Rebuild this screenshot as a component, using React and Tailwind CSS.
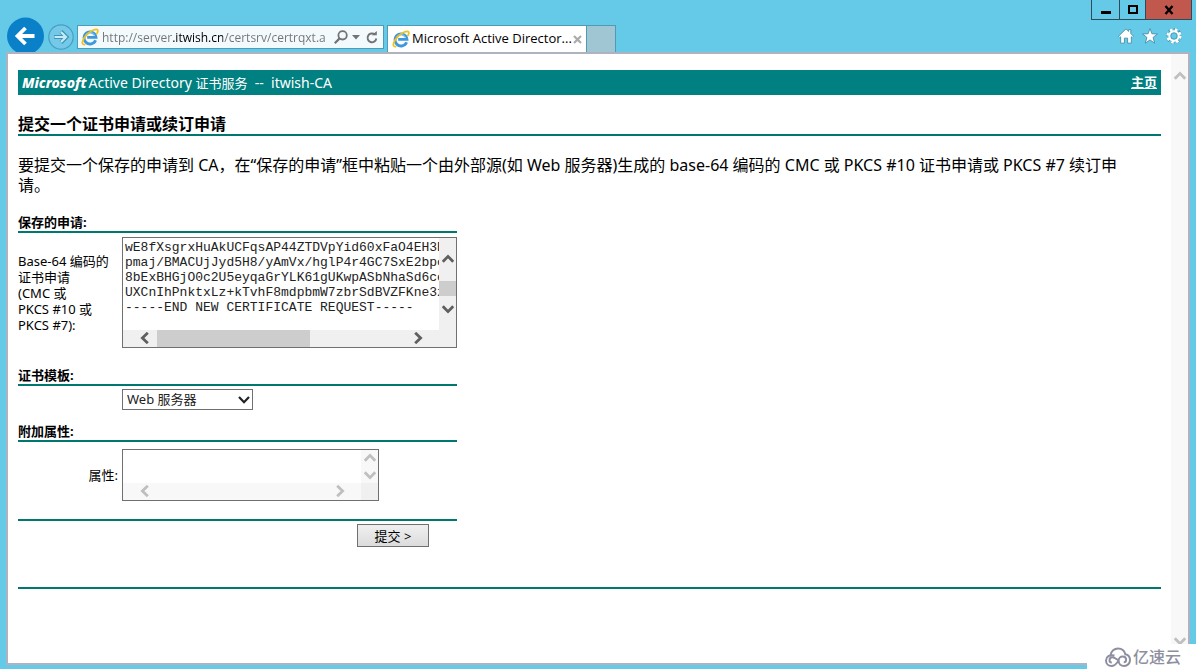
import { useState } from 'react';
import clsx from 'clsx';

const REQUEST = [
    'wE8fXsgrxHuAkUCFqsAP44ZTDVpYid60xFaO4EH3E',
    'pmaj/BMACUjJyd5H8/yAmVx/hglP4r4GC7SxE2bpc',
    '8bExBHGjO0c2U5eyqaGrYLK61gUKwpASbNhaSd6co',
    'UXCnIhPnktxLz+kTvhF8mdpbmW7zbrSdBVZFKne3z',
    '-----END NEW CERTIFICATE REQUEST-----',
].join('\n');

const ROTATE = {
    up: '',
    right: 'rotate-90',
    down: 'rotate-180',
    left: '-rotate-90',
};

function IeLogo() {
    return (
        <svg viewBox="0 0 18 18" className="size-[18px] shrink-0" fill="none">
            <path d="M14.6 12.2A6 6 0 1 1 15 9.3H6.2" stroke="#3f97dc" strokeWidth="2.8" />
            <path d="M13.8 8A5 5 0 0 0 4.6 7" stroke="#8fd0f5" strokeWidth="1" />
            <path d="M3.6 16.6C-.2 17 1.2 11.4 5.6 6.8S15.6.2 16.6 2c.5.9.1 2.2-.7 3.6" stroke="#f2c21c" strokeWidth="1.8" strokeLinecap="round" />
        </svg>
    );
}

function ArrowButton({ dir, label, disabled }) {
    return (
        <button
            type="button"
            aria-label={label}
            disabled={disabled}
            className={clsx('flex h-4 w-[17px] shrink-0 items-center justify-center', disabled ? 'text-[#bfbfbf]' : 'text-[#5f5f5f]')}
        >
            <svg viewBox="0 0 12 12" className={clsx('size-3', ROTATE[dir])} fill="none" stroke="currentColor" strokeWidth="2.8">
                <path d="M.8 8.8 6 3.4l5.2 5.4" />
            </svg>
        </button>
    );
}

// text area with the always-visible scroll bars of the old browser
function ScrollBox({ className, disabled, vertical, horizontal, ...props }) {
    const bar = disabled ? 'bg-[#f8f8f8]' : 'bg-[#f0f0f0]';
    return (
        <div className={clsx('grid grid-cols-[minmax(0,1fr)_17px] grid-rows-[minmax(0,1fr)_17px] border border-[#707070] bg-white', className)}>
            <textarea
                wrap="off"
                spellCheck={false}
                className="block h-full w-full resize-none overflow-hidden px-0.5 pt-0.5 font-['Liberation_Mono',monospace] text-[13px] leading-[15px] text-[#222] outline-none"
                {...props}
            />
            <div className={clsx('flex flex-col justify-between', bar, !disabled && 'py-[13px]')}>
                <ArrowButton dir="up" label="向上滚动" disabled={disabled} />
                {vertical}
                <ArrowButton dir="down" label="向下滚动" disabled={disabled} />
            </div>
            <div className={clsx('flex justify-between px-[13px]', bar)}>
                <ArrowButton dir="left" label="向左滚动" disabled={disabled} />
                {horizontal}
                <ArrowButton dir="right" label="向右滚动" disabled={disabled} />
            </div>
            <div className="bg-[#f0f0f0]" />
        </div>
    );
}

function SectionTitle({ className, children, ...props }) {
    return (
        <h2 className={clsx('border-b-2 border-[#00786f] text-[13px] leading-[18px] font-bold', className)} {...props}>
            {children}
        </h2>
    );
}

function BrowserBar() {
    const [url, setUrl] = useState('http://server.itwish.cn/certsrv/certrqxt.a');

    return (
        <header className="flex h-[52px] items-end font-['Open_Sans','Noto_Sans_CJK_SC',sans-serif]">
            <nav className="flex min-w-0 flex-1 items-end">
                <button type="button" aria-label="后退" className="h-[35px] w-[38px] shrink-0">
                    <svg viewBox="0 0 38 35" className="h-[35px] w-[38px]">
                        <circle cx="19.500" cy="19" r="18.5" fill="#0a80c8" />
                        <path d="M28.500 19H12M19.500 11l-8 8 8 8" fill="none" stroke="#fff" strokeWidth="3.8" />
                    </svg>
                </button>
                <button type="button" aria-label="前进" className="mb-0.5 ml-1 size-[26px] shrink-0">
                    <svg viewBox="0 0 26 26" className="size-[26px]" fill="none">
                        <circle cx="13" cy="13" r="12.2" fill="#74c9e8" stroke="#4a9dbe" strokeWidth="1.2" />
                        <path d="M6 13h12M13 7.500l5.500 5.500-5.500 5.500" stroke="#3f93b5" strokeWidth="4" />
                        <path d="M6.500 13h11M13 8l5 5-5 5" stroke="#c5ebf8" strokeWidth="2.200" />
                    </svg>
                </button>
                <div className="mb-[3px] ml-[3px] flex h-6 w-[307px] items-center border border-[#4f9bb5] bg-[#f2fafd] pl-[3px] text-[#737373]">
                    <IeLogo />
                    <input
                        aria-label="地址"
                        value={url}
                        onChange={(e) => setUrl(e.target.value)}
                        className="ml-[3px] h-5 w-[228px] min-w-0 shrink-0 bg-[linear-gradient(90deg,#737373_71px,#000_71px,#000_121px,#737373_121px)] bg-clip-text text-xs text-transparent caret-black outline-none"
                    />
                    <button type="button" aria-label="搜索" className="ml-1">
                        <svg viewBox="0 0 14 14" className="size-3.5" fill="none" stroke="currentColor" strokeWidth="1.8">
                            <circle cx="8.600" cy="5.300" r="4.200" />
                            <path d="M5.600 8.400.8 13.200" strokeWidth="2.200" />
                        </svg>
                    </button>
                    <button type="button" aria-label="地址列表" className="ml-1">
                        <svg viewBox="0 0 8 5" className="h-[5px] w-2" fill="currentColor">
                            <path d="M0 0h8L4 4.500z" />
                        </svg>
                    </button>
                    <button type="button" aria-label="刷新" className="ml-1.5">
                        <svg viewBox="0 0 12 13" className="h-[13px] w-3" fill="none" stroke="currentColor" strokeWidth="1.900">
                            <path d="M8.800 3.500A4.400 4.400 0 1 0 10.300 7.500" />
                            <path d="M5.800 4.200h5V0z" fill="currentColor" stroke="none" />
                        </svg>
                    </button>
                </div>
                <div className="ml-[3px] flex h-[27px] w-[200px] items-center border border-b-0 border-[#4f9bb5] bg-white pl-1">
                    <IeLogo />
                    <span className="ml-0.5 flex-1 text-[13px] whitespace-nowrap">Microsoft Active Director...</span>
                    <button type="button" aria-label="关闭选项卡" className="mr-1">
                        <svg viewBox="0 0 9 9" className="size-[9px]" stroke="#ababab" strokeWidth="2.200">
                            <path d="m1 1 7 7M8 1 1 8" />
                        </svg>
                    </button>
                </div>
                <button type="button" aria-label="新建选项卡" className="h-[27px] w-[29px] border border-b-0 border-l-0 border-[#4f9bb5] bg-[#a0c5d3]" />
            </nav>

            <div className="flex h-full flex-col items-end justify-between">
                <div className="-mr-0.5 flex h-5 border border-t-0 border-[#2f4a58]">
                    <button type="button" aria-label="最小化" className="flex w-7 items-center justify-center border-r border-[#2f4a58]">
                        <svg viewBox="0 0 10 10" className="size-2.5"><path d="M0 6h10v3H0z" /></svg>
                    </button>
                    <button type="button" aria-label="最大化" className="flex w-[25px] items-center justify-center">
                        <svg viewBox="0 0 10 10" className="size-2.5" fill="none" stroke="#000" strokeWidth="2">
                            <path d="M1 1h8v7H1z" />
                        </svg>
                    </button>
                    <button type="button" aria-label="关闭" className="flex w-[46px] items-center justify-center border-l border-[#2f4a58] bg-[#c1584e]">
                        <svg viewBox="0 0 10 10" className="size-2.5" fill="none" stroke="#000" strokeWidth="2.400">
                            <path d="m1.500 1 7 8M8.500 1l-7 8" />
                        </svg>
                    </button>
                </div>
                <div className="mr-2 mb-2 flex gap-2">
                    <button type="button" aria-label="主页按钮">
                        <svg viewBox="0 0 15 15" className="size-4" fill="#fff" stroke="#4289a5" strokeWidth=".8">
                            <path d="M7.500.8 10 3.200V1.500h2v3.700l2.500 2.500-1.200 1.200-.8-.7v6H9V9.500H6v4.700H2.500v-6l-.8.7L.5 7.700z" />
                        </svg>
                    </button>
                    <button type="button" aria-label="收藏夹">
                        <svg viewBox="0 0 15 15" className="size-4" fill="#fff" stroke="#4289a5" strokeWidth=".8">
                            <path d="m7.500.5 1.800 4.900 5.200.2-4.100 3.200 1.500 5.400-4.400-3-4.400 3 1.500-5.400L.5 5.600l5.200-.2z" />
                        </svg>
                    </button>
                    <button type="button" aria-label="工具">
                        <svg viewBox="0 0 15 15" className="size-4" fill="none">
                            <circle cx="7.500" cy="7.500" r="6.300" stroke="#4289a5" strokeWidth="2.400" strokeDasharray="3.200 1.748" strokeDashoffset=".4" />
                            <circle cx="7.500" cy="7.500" r="6" stroke="#fff" strokeWidth="2.400" strokeDasharray="2.400 2.312" />
                            <circle cx="7.500" cy="7.500" r="4.300" stroke="#fff" strokeWidth="2" />
                            <circle cx="7.500" cy="7.500" r="3" stroke="#4289a5" strokeWidth=".7" />
                        </svg>
                    </button>
                </div>
            </div>
        </header>
    );
}

function RequestForm() {
    const [request, setRequest] = useState(REQUEST);
    const [attributes, setAttributes] = useState('');

    return (
        <form className="w-[439px] max-w-full text-[13px]" onSubmit={(e) => e.preventDefault()}>
            <SectionTitle className="mt-[18px]">保存的申请:</SectionTitle>
            <div className="mt-1 flex items-center">
                <label htmlFor="request" className="w-[104px] shrink-0 leading-4">
                    Base-64 编码的<br />证书申请<br />(CMC 或<br />PKCS #10 或<br />PKCS #7):
                </label>
                <ScrollBox
                    id="request"
                    className="h-[111px] flex-1"
                    value={request}
                    onChange={(e) => setRequest(e.target.value)}
                    vertical={<div className="mt-2 h-[15px] shrink-0 bg-[#cdcdcd]" />}
                    horizontal={<div className="mr-auto ml-1 w-[153px] bg-[#cdcdcd]" />}
                />
            </div>

            <SectionTitle id="template-title" className="mt-[18px]">证书模板:</SectionTitle>
            <div className="mt-[3px] pl-[104px]">
                <div className="relative w-[131px]">
                    <select aria-labelledby="template-title" className="block h-[21px] w-full appearance-none border border-[#707070] bg-white pl-1 text-[13px] leading-[17px] text-[#222]">
                        <option>Web 服务器</option>
                    </select>
                    <svg viewBox="0 0 12 8" className="pointer-events-none absolute top-[7px] right-[3px] h-2 w-3" fill="none" stroke="#222" strokeWidth="2.200">
                        <path d="m1 1 5 5.200L11 1" />
                    </svg>
                </div>
            </div>

            <SectionTitle className="mt-3">附加属性:</SectionTitle>
            <div className="mt-[7px] flex items-center">
                <label htmlFor="attributes" className="w-[104px] shrink-0 pr-1 text-right leading-4">属性:</label>
                <ScrollBox
                    id="attributes"
                    className="h-[52px] w-[257px]"
                    disabled
                    value={attributes}
                    onChange={(e) => setAttributes(e.target.value)}
                />
            </div>

            <div className="mt-[18px] flex justify-end border-t-2 border-[#00786f] pt-[3px] pr-7">
                <button type="submit" className="h-[23px] w-[72px] border border-[#707070] bg-linear-to-b from-[#f0f0f0] to-[#dcdcdc] leading-4">
                    提交 &gt;
                </button>
            </div>
        </form>
    );
}

export default function App() {
    return (
        <div lang="zh-CN" className="relative flex min-h-screen flex-col bg-[#65c9e8] px-1.5 pb-1 font-['Noto_Sans','Noto_Sans_CJK_SC',sans-serif] text-black">
            <BrowserBar />
            <div className="flex flex-1 border-2 border-[#aeb3bf] bg-white">
                <main className="min-w-0 flex-1 px-2.5 pt-4">
                    <div className="flex h-[25px] items-center justify-between bg-[#008080] px-1 text-[13px] text-white">
                        <p className="text-sm whitespace-pre">
                            <b className="mr-0.5 font-extrabold italic">Microsoft</b>Active Directory <span className="text-[13px]">证书服务</span>  --  itwish-CA
                        </p>
                        <a href="#home" className="font-bold underline">主页</a>
                    </div>
                    <h1 className="mt-[19px] border-b-2 border-[#00786f] text-base leading-5 font-bold">提交一个证书申请或续订申请</h1>
                    <p className="mt-[19px] pr-4 text-base leading-5">
                        要提交一个保存的申请到 CA，在“保存的申请”框中粘贴一个由外部源(如 Web 服务器)生成的 base-64 编码的 CMC 或 PKCS #10 证书申请或 PKCS #7 续订申请。
                    </p>
                    <RequestForm />
                    <hr className="mt-10 border-t-2 border-[#00786f]" />
                </main>
                <div className="flex w-[17px] flex-col justify-between bg-[#f8f8f8] py-3.5">
                    <ArrowButton dir="up" label="页面向上滚动" disabled />
                    <ArrowButton dir="down" label="页面向下滚动" disabled />
                </div>
            </div>

            <div className="absolute right-0 bottom-0 flex h-[25px] w-[109px] items-center gap-0.5 bg-white pl-[18px] text-[#8d8fa0]">
                <svg viewBox="0 0 26 20" className="h-5 w-[26px]" fill="none" stroke="currentColor" strokeWidth="2">
                    <path d="M5.500 8.500C6 4 9.500 1.500 13 1.500c3.600 0 6.500 2.200 7.300 5.800 2.800.6 4.700 3 4.700 5.700 0 3.400-2.600 6-5.800 6-3.400 0-5.600-2.300-5.600-5.200 0-2.600 1.900-4.300 4.100-4.300 2 0 3.400 1.500 3.400 3.300 0 1.500-1 2.500-2.300 2.500" />
                    <path d="M9.500 8.500C4.500 7.200 1 9.800 1 13.500 1 16.700 3.500 19 6.600 19c3.700 0 5-2.800 7-5.500M6.800 15.600c-1.400 0-2.300-1-2.300-2.300 0-1.700 1.300-3 3-3 2.100 0 3.500 1.700 6.100 3.200" />
                </svg>
                <span className="text-base leading-5 font-medium">亿速云</span>
            </div>
        </div>
    );
}
